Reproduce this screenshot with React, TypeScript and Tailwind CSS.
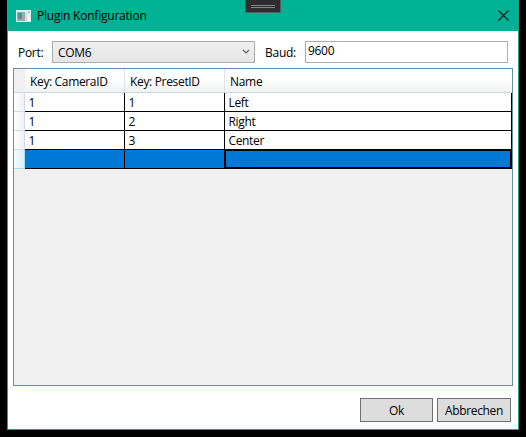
const rows = [
  { camera: '1', preset: '1', name: 'Left' },
  { camera: '1', preset: '2', name: 'Right' },
  { camera: '1', preset: '3', name: 'Center' },
];

function AppIcon() {
  return (
    <svg className="ml-2 h-3 w-[15px] shrink-0" viewBox="0 0 15 12">
      <rect width="15" height="12" fill="#e3ecec" />
      <rect x="1" y="2" width="8" height="9" fill="#8fb0ac" />
      <rect x="2" y="3" width="4" height="6" fill="#5c8d88" />
      <rect x="9" y="2" width="2" height="9" fill="#d5e0e2" />
      <rect x="12" y="1" width="2" height="2" fill="#b4cccc" />
      <rect x="12" y="4" width="2" height="7" fill="#f8f8f8" />
    </svg>
  );
}

function TitleBar() {
  return (
    <header className="relative flex h-[31px] shrink-0 items-center bg-[#00b294]">
      <AppIcon />
      <h1 className="ml-1.5 pt-px text-[12px] leading-4 tracking-[-0.22px]">Plugin Konfiguration</h1>
      <svg className="mr-[9px] ml-auto h-[11px] w-[11px]" viewBox="0 0 11 11" stroke="#06221d" strokeWidth="1.1">
        <path d="M.5.5 10.5 10.5M10.5.5.5 10.5" />
      </svg>
      <div className="absolute top-0 left-[237px] flex h-[13px] w-9 flex-col items-center gap-px border border-t-0 border-[#50605f] bg-[#2d2d30] pt-[5px]">
        <span className="h-px w-6 bg-[#85858a]" />
        <span className="h-px w-6 bg-[#85858a]" />
      </div>
    </header>
  );
}

function Grid() {
  return (
    <section className="ml-[5px] mt-[5px] flex h-[318px] w-[500px] flex-col border border-[#688caf] bg-[#f0f0f0]">
      <div className="flex h-6 border-b border-[#d0d3d8] bg-linear-to-b from-white from-45% to-[#f0f1f3]">
        <span className="w-[11px] bg-[#f0f0f0]" />
        <span className="w-[100px] border-r border-[#dfe2e6] pl-[5px] leading-[25px] tracking-[-0.35px] whitespace-nowrap">Key: CameraID</span>
        <span className="w-[100px] border-r border-[#dfe2e6] pl-[5px] leading-[25px] tracking-[-0.33px] whitespace-nowrap">Key: PresetID</span>
        <span className="pl-[5px] leading-[25px] tracking-[-0.3px]">Name</span>
      </div>
      {rows.map((row) => (
        <div key={row.preset} className="flex h-[19px] leading-[19px]">
          <span className="w-[11px] border-r border-b border-[#d5d8dc] bg-linear-to-r from-white to-[#eff1f4]" />
          <span className="w-[100px] border-r border-b border-black bg-white pl-[3.5px]">{row.camera}</span>
          <span className="w-[100px] border-r border-b border-black bg-white pl-[3.5px]">{row.preset}</span>
          <span className="flex-1 border-r border-b border-black bg-white pl-[3.5px] tracking-[-0.35px]">{row.name}</span>
        </div>
      ))}
      <div className="flex h-[19px]">
        <span className="w-[11px] border-r border-b border-[#a9dcef] bg-linear-to-r from-[#f5fcff] to-[#d9f0fa]" />
        <span className="w-[100px] border-r border-b border-black bg-[#0078d7]" />
        <span className="w-[99px] border-b border-black bg-[#0078d7]" />
        <span className="flex-1 border-2 border-t border-black bg-[#0078d7]" />
      </div>
    </section>
  );
}

export default function App() {
  return (
    <div className="h-[437px] w-[526px] overflow-hidden bg-black pl-[7px] font-['Open_Sans','Noto_Sans',sans-serif] text-[12px] text-black">
      <main className="flex h-[430px] w-[512px] flex-col border border-t-0 border-[#26a08b] bg-white">
        <TitleBar />
        <div className="mt-2.5 flex h-[22px] shrink-0 leading-[23px]">
          <label className="w-11 pl-2.5 tracking-[-0.3px]">Port:</label>
          <div className="flex w-[203px] items-center justify-between border border-[#acacac] bg-linear-to-b from-[#f0f0f0] to-[#e5e5e5] pr-1 pl-[5px]">
            <span className="tracking-[-0.3px]">COM6</span>
            <svg className="h-2 w-2" viewBox="0 0 8 8" fill="none" stroke="#606060" strokeWidth="1.1">
              <path d="M1 2 4 5 7 2" />
            </svg>
          </div>
          <label className="w-[50px] pl-2.5 tracking-[-0.25px]">Baud:</label>
          <div className="w-[203px] border border-[#abadb3] bg-white pl-0.5 leading-[18px] tracking-[-0.3px]">9600</div>
        </div>
        <Grid />
        <footer className="mt-3 mr-[7px] flex justify-end gap-1">
          <button className="h-6 w-[73px] border border-[#707070] bg-[#dddddd] leading-[23px] tracking-[-0.2px]">Ok</button>
          <button className="h-6 w-[74px] border border-[#707070] bg-[#dddddd] leading-[23px] tracking-[-0.35px]">Abbrechen</button>
        </footer>
      </main>
    </div>
  );
}
